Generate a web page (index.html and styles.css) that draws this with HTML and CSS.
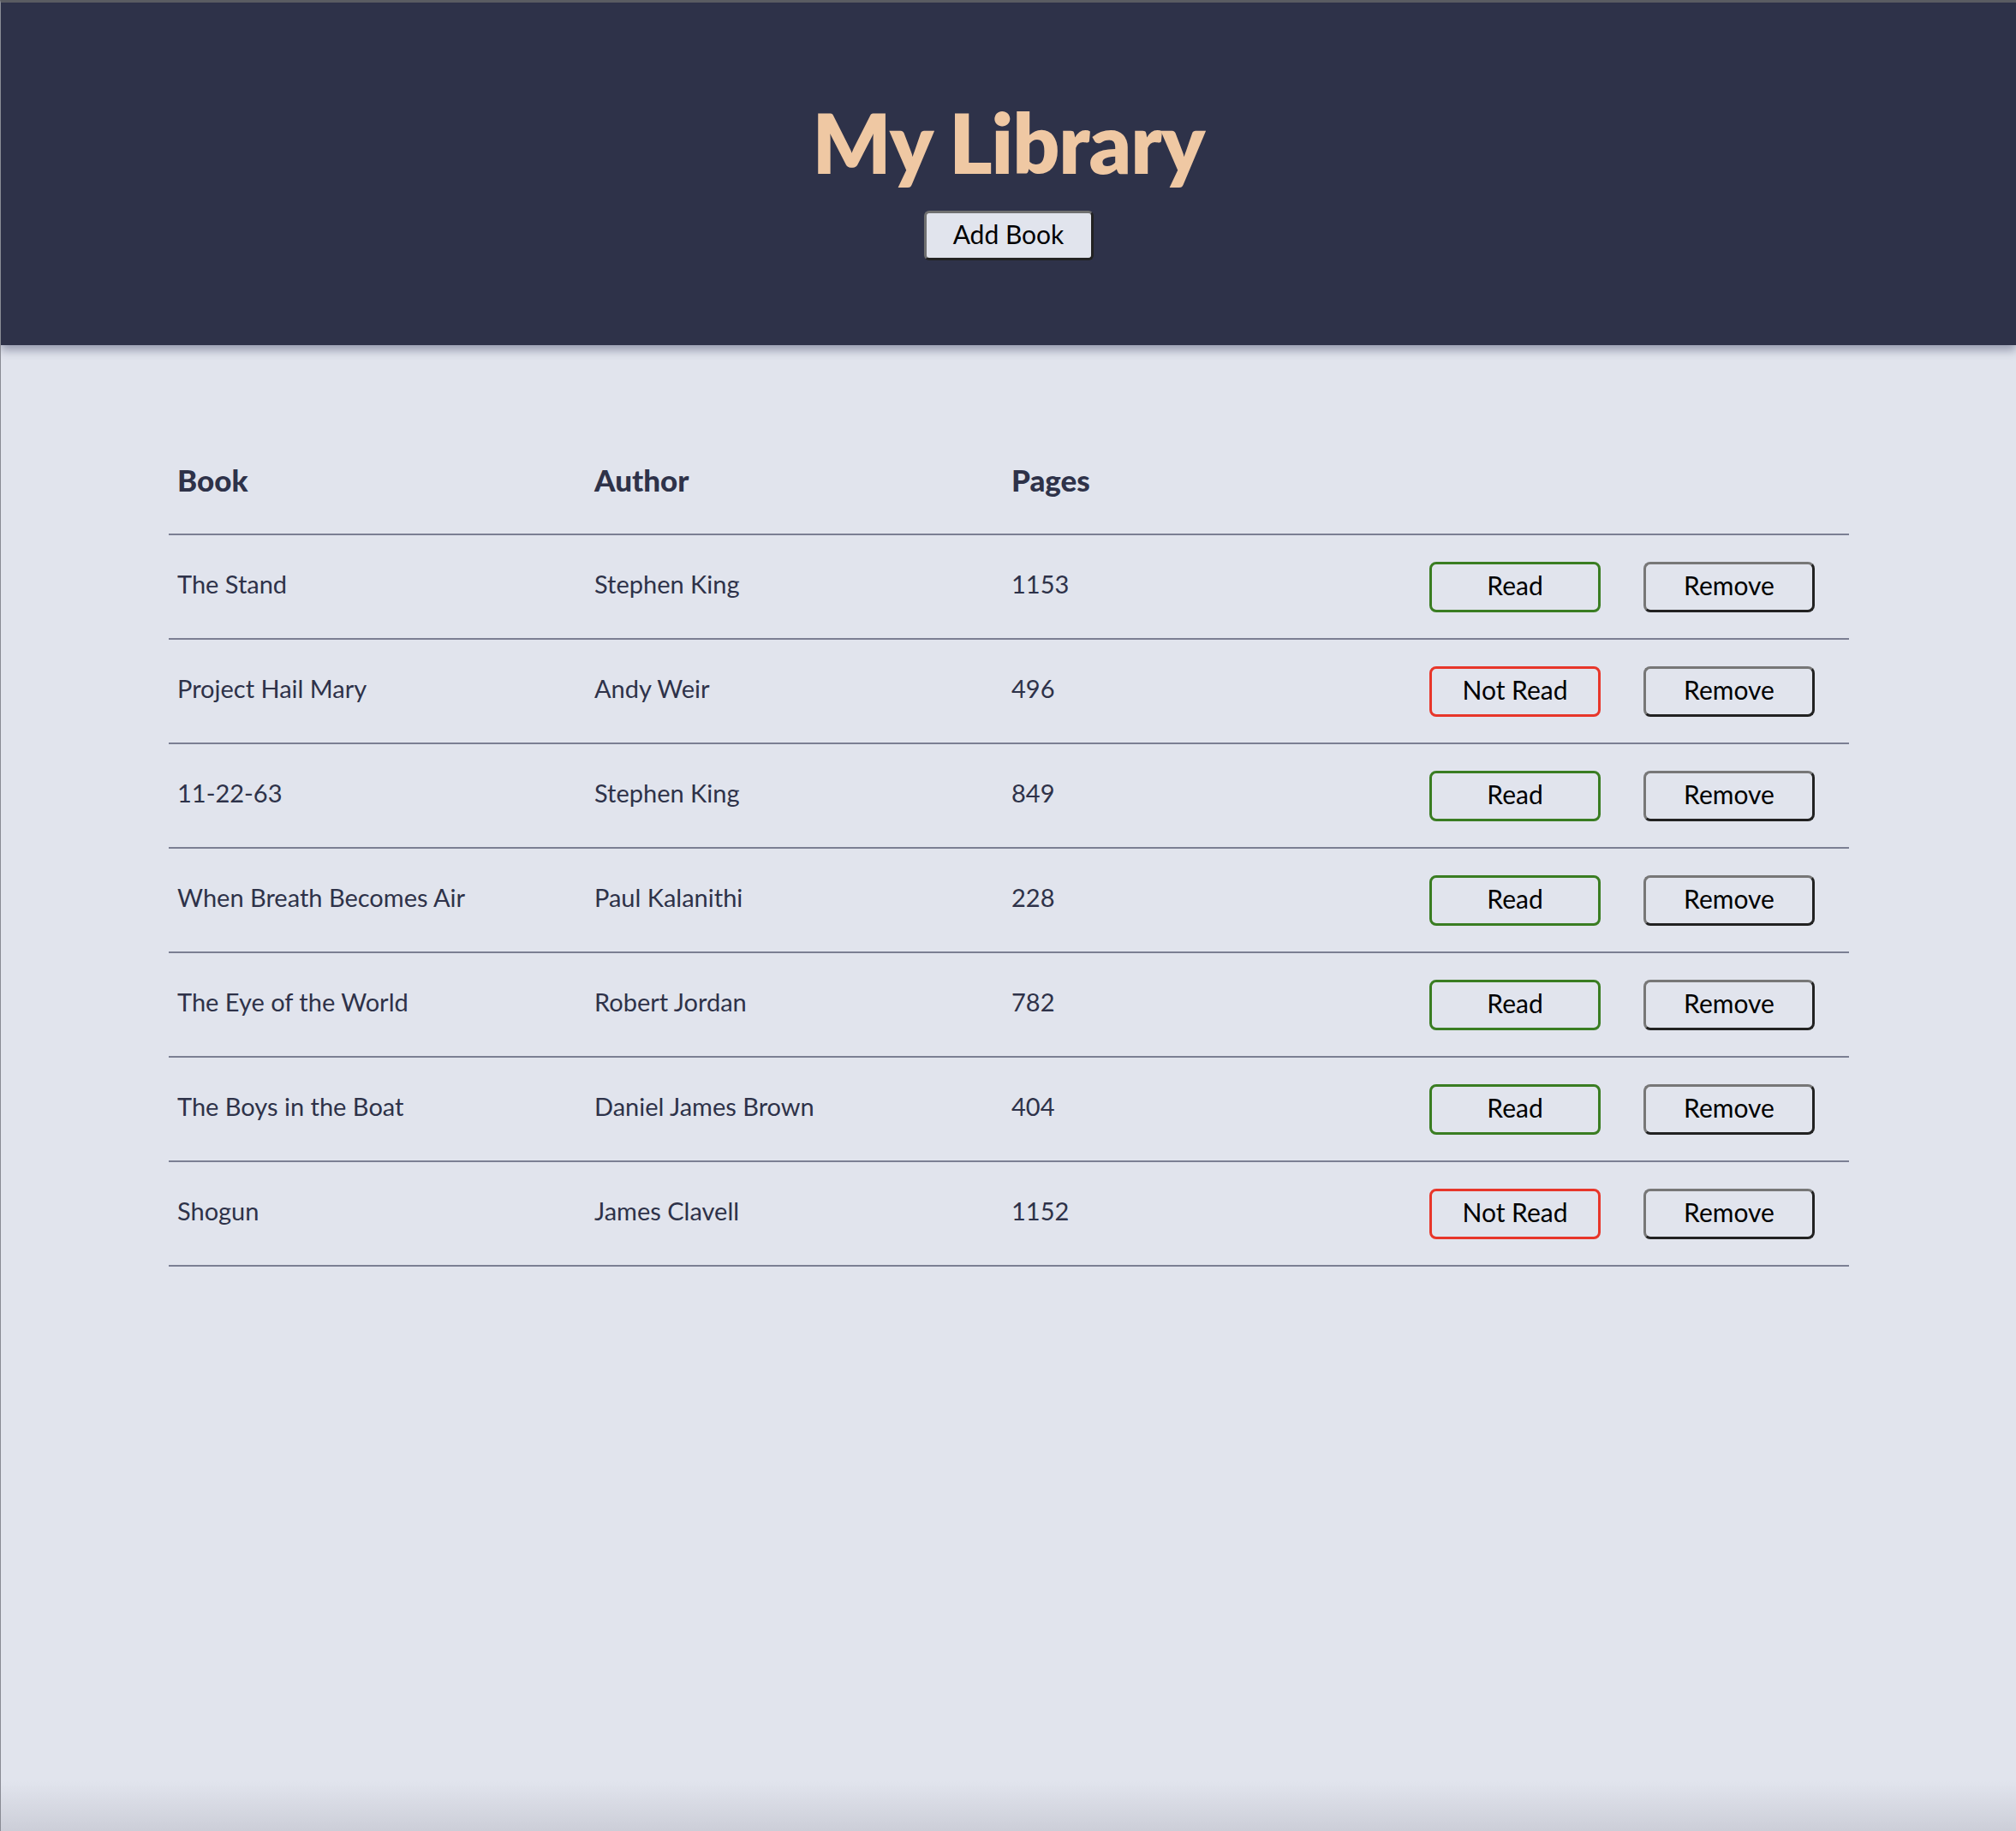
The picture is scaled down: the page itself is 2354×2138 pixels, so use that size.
FILE: index.html
```html
<!DOCTYPE html>
<html lang="en">
<head>
<meta charset="utf-8">
<title>My Library</title>
<link rel="stylesheet" href="styles.css">
</head>
<body>
<header class="top">
  <h1 class="title">My Library</h1>
  <button class="add-btn">Add Book</button>
</header>
<main class="main">
  <div class="table">
    <div class="row head">
      <div class="cell">Book</div>
      <div class="cell">Author</div>
      <div class="cell">Pages</div>
      <div class="cell"></div>
    </div>
    <div class="row">
      <div class="cell">The Stand</div>
      <div class="cell">Stephen King</div>
      <div class="cell">1153</div>
      <div class="actions"><button class="btn read">Read</button><button class="btn remove">Remove</button></div>
    </div>
    <div class="row">
      <div class="cell">Project Hail Mary</div>
      <div class="cell">Andy Weir</div>
      <div class="cell">496</div>
      <div class="actions"><button class="btn notread">Not Read</button><button class="btn remove">Remove</button></div>
    </div>
    <div class="row">
      <div class="cell">11-22-63</div>
      <div class="cell">Stephen King</div>
      <div class="cell">849</div>
      <div class="actions"><button class="btn read">Read</button><button class="btn remove">Remove</button></div>
    </div>
    <div class="row">
      <div class="cell">When Breath Becomes Air</div>
      <div class="cell">Paul Kalanithi</div>
      <div class="cell">228</div>
      <div class="actions"><button class="btn read">Read</button><button class="btn remove">Remove</button></div>
    </div>
    <div class="row">
      <div class="cell">The Eye of the World</div>
      <div class="cell">Robert Jordan</div>
      <div class="cell">782</div>
      <div class="actions"><button class="btn read">Read</button><button class="btn remove">Remove</button></div>
    </div>
    <div class="row">
      <div class="cell">The Boys in the Boat</div>
      <div class="cell">Daniel James Brown</div>
      <div class="cell">404</div>
      <div class="actions"><button class="btn read">Read</button><button class="btn remove">Remove</button></div>
    </div>
    <div class="row">
      <div class="cell">Shogun</div>
      <div class="cell">James Clavell</div>
      <div class="cell">1152</div>
      <div class="actions"><button class="btn notread">Not Read</button><button class="btn remove">Remove</button></div>
    </div>
  </div>
</main>
</body>
</html>
```

FILE: styles.css
```css
* { box-sizing: border-box; }
html, body { margin: 0; padding: 0; }
body {
  min-height: 2138px;
  background: linear-gradient(to bottom, #e1e4ed 0, #e1e4ed 2080px, #ccced8 2138px);
  font-family: Lato, "Noto Sans", sans-serif;
  color: #2e3249;
  border-top: 3px solid #5a5c62;
  border-left: 1px solid #8a8c95;
}
.top {
  background: #2e3249;
  height: 400px;
  display: flex;
  flex-direction: column;
  align-items: center;
  padding-top: 105px;
  box-shadow: 0 6px 10px rgba(60, 66, 100, 0.45);
  position: relative;
}
.title {
  margin: 0;
  font-size: 96px;
  line-height: 116px;
  font-weight: 800;
  color: #efc8a3;
  letter-spacing: -1px;
}
.add-btn {
  margin-top: 22px;
  width: 198px;
  height: 58px;
  font-family: Lato, "Noto Sans", sans-serif;
  font-size: 30px;
  color: #000;
  background: #e1e4ed;
  border: 3px solid;
  border-color: #707070 #222 #222 #707070;
  border-radius: 6px;
  padding: 0 0 4px;
}
.main {
  padding: 100px 195px 0 196px;
}
.table { display: flex; flex-direction: column; }
.row {
  display: grid;
  grid-template-columns: 487px 487px 498px 1fr;
  height: 122px;
  align-items: center;
  border-bottom: 2px solid #7b7f93;
  font-size: 29px;
}
.row.head {
  font-weight: 900;
  font-size: 35px;
}
.cell { padding: 0 0 8px 10px; }
.row.head .cell { padding-bottom: 6px; }
.actions {
  display: flex;
  gap: 50px;
}
.btn {
  width: 200px;
  height: 59px;
  font-family: Lato, "Noto Sans", sans-serif;
  font-size: 30px;
  color: #000;
  background: #e1e4ed;
  border: 3px solid;
  border-radius: 8px;
  padding: 0 0 4px;
}
.btn.read { border-color: #3a7d22; }
.btn.notread { border-color: #e8362a; }
.btn.remove { border-color: #777 #222 #222 #777; }
```
